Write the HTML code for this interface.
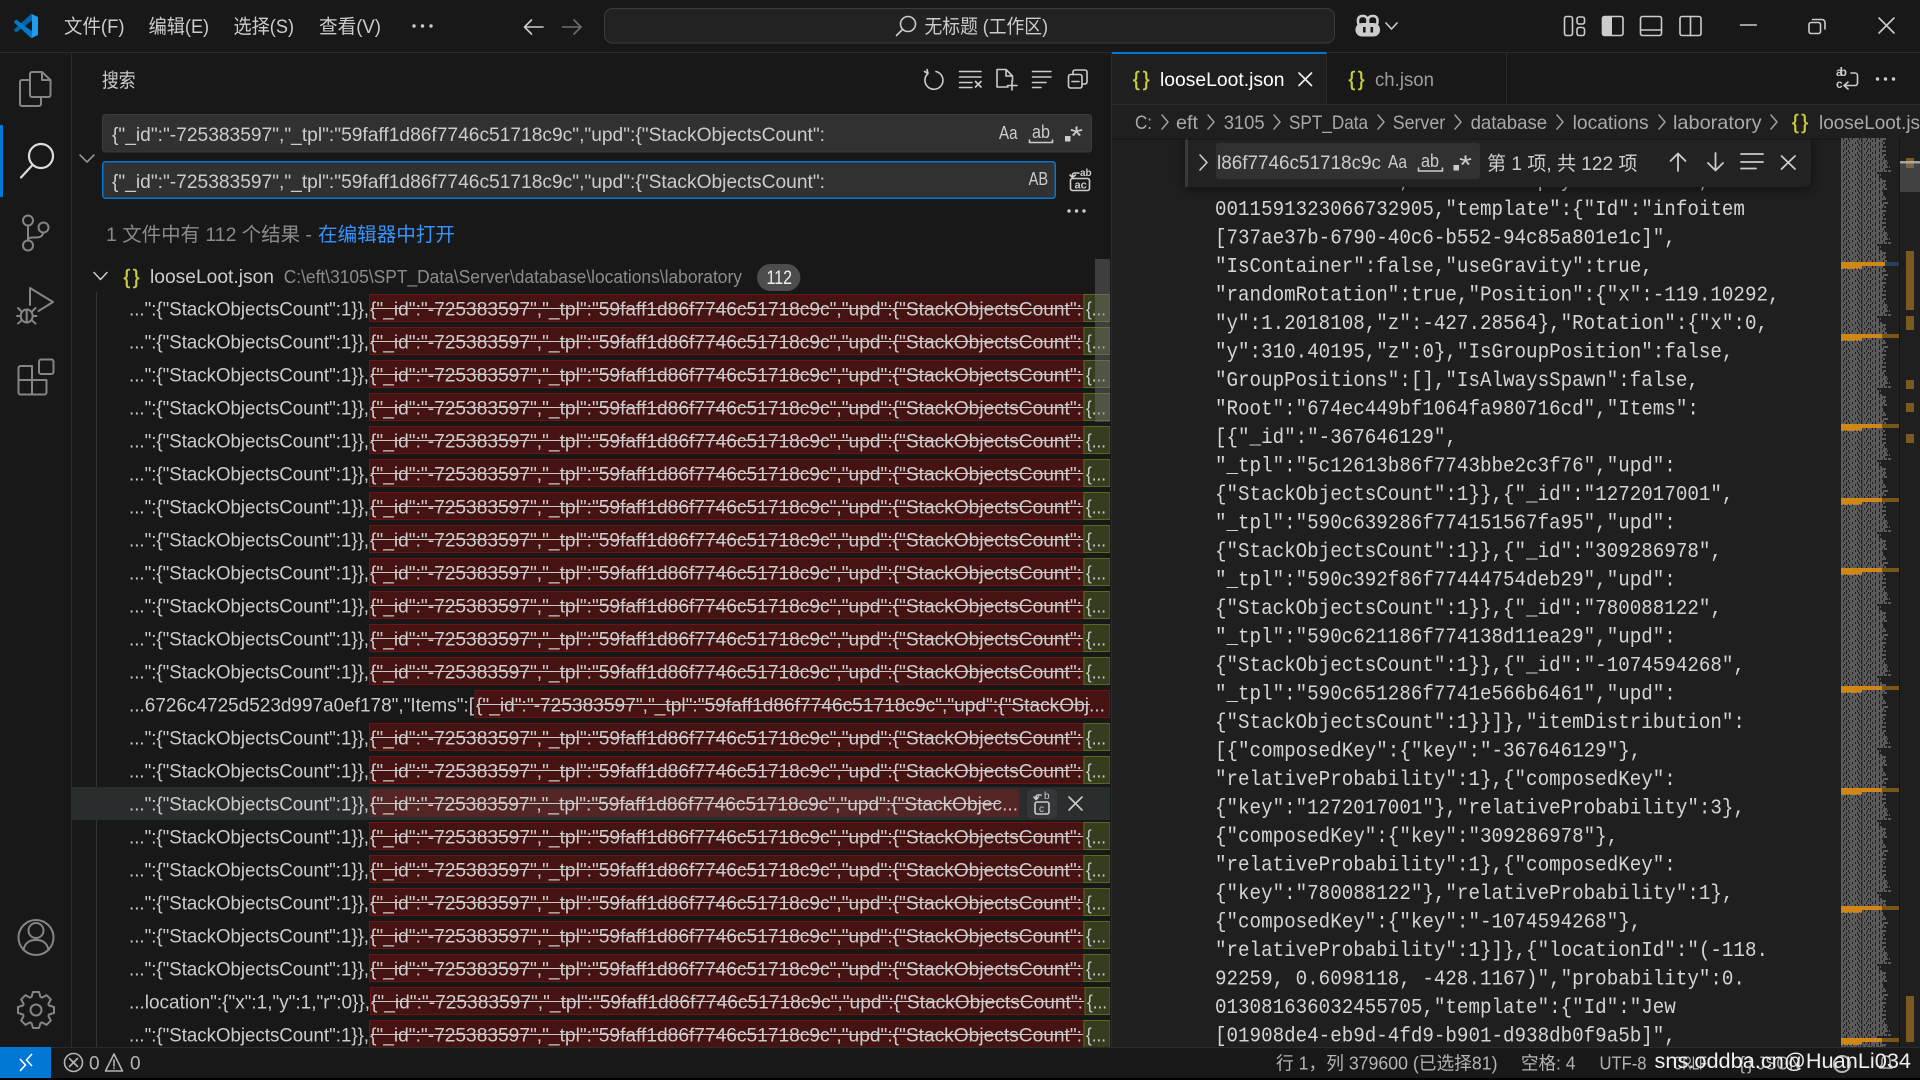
<!DOCTYPE html>
<html lang="zh"><head><meta charset="utf-8"><title>VS Code</title>
<style>
html,body{margin:0;padding:0;background:#000;width:1920px;height:1080px;overflow:hidden}
svg{display:block}
text{font-family:"Liberation Sans","Noto Sans CJK SC",sans-serif;font-size:19.5px;fill:#ccc;white-space:pre}
.m text{font-family:"Liberation Mono",monospace;font-size:21px;fill:#d4d4d4}
.r{fill:#461313;stroke:#6f1313;stroke-width:1}
.g{fill:#363d1f;stroke:#556b22;stroke-width:1}
.sl{stroke:#c8c8c8;stroke-width:1.1;fill:none}
.i{fill:none;stroke:#ccc;stroke-width:1.6;stroke-linecap:round;stroke-linejoin:round}
.a{fill:none;stroke:#858585;stroke-width:2;stroke-linecap:round;stroke-linejoin:round}
.c{fill:none;stroke:#a0a0a0;stroke-width:1.5;stroke-linecap:round;stroke-linejoin:round}
.y{fill:#cbcb41;font-size:20px;stroke:#cbcb41;stroke-width:.4}
.b{fill:#a9a9a9}
.st{font-size:18px;fill:#b4b4b4}
</style></head><body>
<svg width="1920" height="1080" viewBox="0 0 1920 1080" xmlns="http://www.w3.org/2000/svg">
<defs>
<filter id="sh" x="-10%" y="-50%" width="120%" height="200%"><feDropShadow dx="0" dy="2" stdDeviation="6" flood-color="#000" flood-opacity=".55"/></filter>
<clipPath id="cs"><rect x="72" y="292" width="1038" height="755"/></clipPath>
<clipPath id="ci"><rect x="1218" y="143" width="166" height="36"/></clipPath>
<clipPath id="ce"><rect x="1112" y="138" width="808" height="909"/></clipPath>
<pattern id="mm" x="1841" y="138" width="58" height="72" patternUnits="userSpaceOnUse">
<g fill="none" stroke="#7e7e7e" stroke-width="1.2">
<path stroke-dasharray="2 1 4 1 3 1 6 1 1 1 5 1" d="M0 1H45M0 7H42M0 13H46M0 19H43M0 25H48M0 31H44M0 37H40M0 43H46M0 49H44M0 55H42M0 61H46M0 67H43"/>
<path stroke-dasharray="5 1 2 1 7 1 3 1 4 1" d="M0 3H43M0 9H45M0 15H41M0 21H44M0 27H47M0 33H50M0 39H38M0 45H44M0 51H46M0 57H43M0 63H41M0 69H45"/>
<path stroke-dasharray="3 1 1 1 8 1 2 1 5 1" d="M0 5H44M0 11H42M0 17H45M0 23H46M0 29H49M0 35H36M0 41H42M0 47H45M0 53H41M0 59H44M0 65H47M0 71H42"/>
</g><rect x="20.5" y="0" width="1.2" height="72" fill="#1f1f1f" opacity=".55"/>
</pattern>
</defs>

<!-- base -->
<rect width="1920" height="1080" fill="#000"/>
<rect width="1920" height="1078" fill="#181818"/>
<path d="M0 52.5H1920" stroke="#2b2b2b"/>
<path d="M71.5 52V1047M1111.5 52V1047" stroke="#2b2b2b"/>

<!-- title bar -->
<g transform="translate(14,14) scale(.24)">
<path fill="#0065A9" d="M96.5 10.8 75.9.9c-2.4-1.2-5.2-.7-7.1 1.2L1.4 63.5c-1.8 1.6-1.8 4.5 0 6.1l5.5 5c1.5 1.3 3.7 1.4 5.3.2L93.4 13.3c2.7-2 6.6-.1 6.6 3.3v-.2c0-2.4-1.4-4.6-3.5-5.6Z"/>
<path fill="#007ACC" d="M96.5 89.2 75.9 99.1c-2.4 1.2-5.2.7-7.1-1.2L1.4 36.5c-1.8-1.6-1.8-4.5 0-6.1l5.5-5c1.5-1.3 3.7-1.4 5.3-.2l81.2 61.5c2.7 2 6.6.1 6.6-3.3v.2c0 2.4-1.4 4.6-3.5 5.6Z"/>
<path fill="#1F9CF0" d="M75.9 99.1c-2.4 1.2-5.2.9-7.1-1 2.3 2.3 6.3.7 6.3-2.6V4.5c0-3.3-4-4.9-6.3-2.6 1.9-1.9 4.7-2.2 7.1-1l20.6 9.9c2.1 1 3.5 3.2 3.5 5.6v67.2c0 2.4-1.4 4.6-3.5 5.6Z"/>
</g>
<text x="64" y="33" textLength="60.5" lengthAdjust="spacingAndGlyphs">文件(F)</text>
<text x="148.6" y="33" textLength="60.5" lengthAdjust="spacingAndGlyphs">编辑(E)</text>
<text x="233.5" y="33" textLength="60.5" lengthAdjust="spacingAndGlyphs">选择(S)</text>
<text x="319" y="33" textLength="62" lengthAdjust="spacingAndGlyphs">查看(V)</text>
<g fill="#ccc"><circle cx="414" cy="26" r="1.7"/><circle cx="422.5" cy="26" r="1.7"/><circle cx="431" cy="26" r="1.7"/></g>
<path class="i" d="M524.5 27H543M531.5 20L524.5 27L531.5 34"/>
<path class="i" style="stroke:#6f6f6f" d="M562.5 27H581M574 20L581 27L574 34"/>
<rect x="604.5" y="8.5" width="730" height="34.5" rx="8" fill="#222" stroke="#3c3c3c"/>
<circle class="i" cx="908" cy="24" r="7.5"/><path class="i" d="M902.5 29.5L896.5 35.5"/>
<text x="924.5" y="33" textLength="123.5" lengthAdjust="spacingAndGlyphs">无标题 (工作区)</text>
<g fill="none" stroke="#ccc" stroke-width="2.6"><rect x="1358" y="16" width="9.5" height="10" rx="4"/><rect x="1368" y="16" width="9.5" height="10" rx="4"/></g>
<rect x="1355.5" y="23" width="24.5" height="13.5" rx="6.5" fill="#ccc"/>
<rect x="1363" y="27" width="2.6" height="5.5" fill="#181818"/><rect x="1370.5" y="27" width="2.6" height="5.5" fill="#181818"/>
<path class="i" d="M1386 23L1391.5 29L1397 23"/>
<g class="i">
<rect x="1564.5" y="16.5" width="8" height="19" rx="2"/><rect x="1577" y="17" width="7.5" height="7" rx="2"/><rect x="1577" y="27.5" width="7.5" height="8" rx="2"/>
<rect x="1602.5" y="16.5" width="20.5" height="19" rx="2"/>
<rect x="1640.5" y="16.5" width="21" height="19" rx="2"/><path d="M1640.5 30H1661.5"/>
<rect x="1680" y="16.5" width="21" height="19" rx="2"/><path d="M1690.5 16.5V35.5"/>
<path d="M1740.5 25H1756.3"/>
<rect x="1809" y="22.5" width="11.5" height="11" rx="2"/><path d="M1812.5 19.5H1822a3 3 0 0 1 3 3V29"/>
<path d="M1879 18L1894 33M1894 18L1879 33"/>
</g>
<path d="M1603 18.5a2 2 0 0 1 2-2h7v19h-7a2 2 0 0 1-2-2z" fill="#ccc"/>

<!-- activity bar -->
<g class="a">
<path d="M30 74a2 2 0 0 1 2-2H42L50.5 80V95a2 2 0 0 1-2 2H32a2 2 0 0 1-2-2ZM42 72V80H50.5"/>
<path d="M30 80H22a2 2 0 0 0-2 2V104a2 2 0 0 0 2 2H39a2 2 0 0 0 2-2V97"/>
<circle cx="28" cy="220.5" r="5"/><circle cx="28" cy="245.5" r="5"/><circle cx="43.5" cy="227.5" r="5"/>
<path d="M28 225.5V240.5M43 232.5C43 236 40 237.5 36 237.5H33C30 237.5 28 238 28 240.5"/>
<path d="M30 305V288L53 302L38.5 311"/>
<ellipse cx="26.7" cy="316" rx="6" ry="6.5"/><path d="M21 311L18 308M32.5 311L35.5 308M20.5 316H17M33 316H36.5M21 321L18 323.5M32.5 321L35.5 323.5M26.7 310V322"/>
<rect x="39" y="359.5" width="14.5" height="14.5" rx="2"/>
<path d="M18.5 368a2 2 0 0 1 2-2H32V380H46.5V392.5a2 2 0 0 1-2 2H20.5a2 2 0 0 1-2-2ZM18.5 380H32V394.5"/>
<circle cx="36" cy="937.5" r="17.5"/><circle cx="36" cy="930.5" r="7.5"/><path d="M23.5 950C25 942 30 940 36 940S47 942 48.5 950"/>
<circle cx="36" cy="1010" r="5.5"/>
<path transform="translate(36,1010)" d="M-3-18H3L4.5-13L6-12.4L10.6-14.85L14.85-10.6L12.4-6L13-4.5L18-3V3L13 4.5L12.4 6L14.85 10.6L10.6 14.85L6 12.4L4.5 13L3 18H-3L-4.5 13L-6 12.4L-10.6 14.85L-14.85 10.6L-12.4 6L-13 4.5L-18 3V-3L-13-4.5L-12.4-6L-14.85-10.6L-10.6-14.85L-6-12.4L-4.5-13Z"/>
</g>
<rect x="0" y="125" width="3" height="72" fill="#0078d4"/>
<circle cx="41" cy="156" r="12" fill="none" stroke="#dcdcdc" stroke-width="2.2"/><path d="M32.5 165L21 177.5" stroke="#dcdcdc" stroke-width="2.2" stroke-linecap="round"/>

<!-- sidebar header -->
<text x="102" y="87" textLength="33.5" lengthAdjust="spacingAndGlyphs">搜索</text>
<g class="i">
<path d="M928 73.5A9 9 0 1 0 936 71.5M924.5 71.5L928 73.5L927 69.5" />
<path d="M959.5 71.5H981M959.5 77H981M959.5 82.5H972M959.5 87.5H972M975.5 81.5L981 87M981 81.5L975.5 87"/>
<path d="M1008 87H997V69.5H1006L1012.5 76V81M1006 69.5V76H1012.5M1012 81V90M1007.5 85.5H1017"/>
<path d="M1032.5 71.5H1051M1032.5 77H1051M1032.5 82.5H1046M1032.5 87.5H1041"/>
<rect x="1068.5" y="74.5" width="13.5" height="13.5" rx="2"/><path d="M1073 74.5V72a2 2 0 0 1 2-2H1085a2 2 0 0 1 2 2V82a2 2 0 0 1-2 2H1082M1072 81.5H1079"/>
</g>
<path class="c" d="M80 155L87 162L94 155"/>

<!-- search inputs -->
<rect x="102.5" y="114.5" width="989" height="37.5" rx="3" fill="#313131" stroke="#3c3c3c"/>
<rect x="102.75" y="161.75" width="952.5" height="36.5" rx="3" fill="#313131" stroke="#0078d4" stroke-width="1.5"/>
<text x="112" y="141" textLength="713" lengthAdjust="spacingAndGlyphs">{"_id":"-725383597","_tpl":"59faff1d86f7746c51718c9c","upd":{"StackObjectsCount":</text>
<text x="112" y="188" textLength="713" lengthAdjust="spacingAndGlyphs">{"_id":"-725383597","_tpl":"59faff1d86f7746c51718c9c","upd":{"StackObjectsCount":</text>
<text x="999" y="139" style="font-size:18px" textLength="18.5" lengthAdjust="spacingAndGlyphs">Aa</text>
<text x="1032" y="138" style="font-size:18px" textLength="18" lengthAdjust="spacingAndGlyphs">ab</text><path class="i" d="M1029.5 140V142.5H1052.5V140"/>
<rect x="1065" y="136" width="5.5" height="5.5" fill="#ccc"/><text x="1070" y="145" style="font-size:27px" textLength="13" lengthAdjust="spacingAndGlyphs">*</text>
<text x="1028.6" y="185" style="font-size:18px" textLength="19.5" lengthAdjust="spacingAndGlyphs">AB</text>
<g class="i"><rect x="1070.5" y="178.5" width="19" height="12" rx="2"/><path d="M1072.5 177V175a2 2 0 0 1 2-2H1079M1070 175L1072.5 177.5L1075.5 175"/></g>
<text x="1080" y="176" style="font-size:10px;font-weight:bold">ab</text><text x="1074.5" y="188.5" style="font-size:11px;font-weight:bold">ac</text>
<g fill="#ccc"><circle cx="1069" cy="211" r="1.7"/><circle cx="1076.5" cy="211" r="1.7"/><circle cx="1084" cy="211" r="1.7"/></g>

<text x="106" y="241" style="fill:#8b8b8b" textLength="206" lengthAdjust="spacingAndGlyphs">1 文件中有 112 个结果 -</text>
<text x="318" y="241" style="fill:#3794ff" textLength="137" lengthAdjust="spacingAndGlyphs">在编辑器中打开</text>

<!-- file row -->
<path class="c" style="stroke:#ccc" d="M94 272.5L100.5 279.5L107 272.5"/>
<text class="y" x="123.5" y="284" textLength="16" lengthAdjust="spacing">{}</text>
<text x="150" y="283.2" textLength="124" lengthAdjust="spacingAndGlyphs">looseLoot.json</text>
<text x="283.7" y="283.2" style="fill:#8c8c8c;font-size:18px" textLength="458.3" lengthAdjust="spacingAndGlyphs">C:\eft\3105\SPT_Data\Server\database\locations\laboratory</text>
<rect x="757" y="264" width="43.4" height="27" rx="13.5" fill="#4d4d4d"/>
<text x="766.5" y="284" style="fill:#f0f0f0" textLength="25.5" lengthAdjust="spacingAndGlyphs">112</text>
<path d="M96.5 292V1047" stroke="#333"/>

<!-- results -->
<g clip-path="url(#cs)">
<rect x="72" y="787" width="1039" height="33" fill="#2a2d2e"/>
<g transform="translate(0,292)"><rect class="r" x="369.5" y="2.5" width="714" height="27"/><rect class="g" x="1084" y="2.5" width="26" height="27"/><text x="129" y="23.6" textLength="240" lengthAdjust="spacingAndGlyphs">...":{"StackObjectsCount":1}},</text><text x="370" y="23.6" textLength="712" lengthAdjust="spacingAndGlyphs">{"_id":"-725383597","_tpl":"59faff1d86f7746c51718c9c","upd":{"StackObjectsCount":</text><path class="sl" d="M371 16.5H1083"/><text x="1086" y="23.6" textLength="20" lengthAdjust="spacingAndGlyphs">{...</text></g>
<g transform="translate(0,325)"><rect class="r" x="369.5" y="2.5" width="714" height="27"/><rect class="g" x="1084" y="2.5" width="26" height="27"/><text x="129" y="23.6" textLength="240" lengthAdjust="spacingAndGlyphs">...":{"StackObjectsCount":1}},</text><text x="370" y="23.6" textLength="712" lengthAdjust="spacingAndGlyphs">{"_id":"-725383597","_tpl":"59faff1d86f7746c51718c9c","upd":{"StackObjectsCount":</text><path class="sl" d="M371 16.5H1083"/><text x="1086" y="23.6" textLength="20" lengthAdjust="spacingAndGlyphs">{...</text></g>
<g transform="translate(0,358)"><rect class="r" x="369.5" y="2.5" width="714" height="27"/><rect class="g" x="1084" y="2.5" width="26" height="27"/><text x="129" y="23.6" textLength="240" lengthAdjust="spacingAndGlyphs">...":{"StackObjectsCount":1}},</text><text x="370" y="23.6" textLength="712" lengthAdjust="spacingAndGlyphs">{"_id":"-725383597","_tpl":"59faff1d86f7746c51718c9c","upd":{"StackObjectsCount":</text><path class="sl" d="M371 16.5H1083"/><text x="1086" y="23.6" textLength="20" lengthAdjust="spacingAndGlyphs">{...</text></g>
<g transform="translate(0,391)"><rect class="r" x="369.5" y="2.5" width="714" height="27"/><rect class="g" x="1084" y="2.5" width="26" height="27"/><text x="129" y="23.6" textLength="240" lengthAdjust="spacingAndGlyphs">...":{"StackObjectsCount":1}},</text><text x="370" y="23.6" textLength="712" lengthAdjust="spacingAndGlyphs">{"_id":"-725383597","_tpl":"59faff1d86f7746c51718c9c","upd":{"StackObjectsCount":</text><path class="sl" d="M371 16.5H1083"/><text x="1086" y="23.6" textLength="20" lengthAdjust="spacingAndGlyphs">{...</text></g>
<g transform="translate(0,424)"><rect class="r" x="369.5" y="2.5" width="714" height="27"/><rect class="g" x="1084" y="2.5" width="26" height="27"/><text x="129" y="23.6" textLength="240" lengthAdjust="spacingAndGlyphs">...":{"StackObjectsCount":1}},</text><text x="370" y="23.6" textLength="712" lengthAdjust="spacingAndGlyphs">{"_id":"-725383597","_tpl":"59faff1d86f7746c51718c9c","upd":{"StackObjectsCount":</text><path class="sl" d="M371 16.5H1083"/><text x="1086" y="23.6" textLength="20" lengthAdjust="spacingAndGlyphs">{...</text></g>
<g transform="translate(0,457)"><rect class="r" x="369.5" y="2.5" width="714" height="27"/><rect class="g" x="1084" y="2.5" width="26" height="27"/><text x="129" y="23.6" textLength="240" lengthAdjust="spacingAndGlyphs">...":{"StackObjectsCount":1}},</text><text x="370" y="23.6" textLength="712" lengthAdjust="spacingAndGlyphs">{"_id":"-725383597","_tpl":"59faff1d86f7746c51718c9c","upd":{"StackObjectsCount":</text><path class="sl" d="M371 16.5H1083"/><text x="1086" y="23.6" textLength="20" lengthAdjust="spacingAndGlyphs">{...</text></g>
<g transform="translate(0,490)"><rect class="r" x="369.5" y="2.5" width="714" height="27"/><rect class="g" x="1084" y="2.5" width="26" height="27"/><text x="129" y="23.6" textLength="240" lengthAdjust="spacingAndGlyphs">...":{"StackObjectsCount":1}},</text><text x="370" y="23.6" textLength="712" lengthAdjust="spacingAndGlyphs">{"_id":"-725383597","_tpl":"59faff1d86f7746c51718c9c","upd":{"StackObjectsCount":</text><path class="sl" d="M371 16.5H1083"/><text x="1086" y="23.6" textLength="20" lengthAdjust="spacingAndGlyphs">{...</text></g>
<g transform="translate(0,523)"><rect class="r" x="369.5" y="2.5" width="714" height="27"/><rect class="g" x="1084" y="2.5" width="26" height="27"/><text x="129" y="23.6" textLength="240" lengthAdjust="spacingAndGlyphs">...":{"StackObjectsCount":1}},</text><text x="370" y="23.6" textLength="712" lengthAdjust="spacingAndGlyphs">{"_id":"-725383597","_tpl":"59faff1d86f7746c51718c9c","upd":{"StackObjectsCount":</text><path class="sl" d="M371 16.5H1083"/><text x="1086" y="23.6" textLength="20" lengthAdjust="spacingAndGlyphs">{...</text></g>
<g transform="translate(0,556)"><rect class="r" x="369.5" y="2.5" width="714" height="27"/><rect class="g" x="1084" y="2.5" width="26" height="27"/><text x="129" y="23.6" textLength="240" lengthAdjust="spacingAndGlyphs">...":{"StackObjectsCount":1}},</text><text x="370" y="23.6" textLength="712" lengthAdjust="spacingAndGlyphs">{"_id":"-725383597","_tpl":"59faff1d86f7746c51718c9c","upd":{"StackObjectsCount":</text><path class="sl" d="M371 16.5H1083"/><text x="1086" y="23.6" textLength="20" lengthAdjust="spacingAndGlyphs">{...</text></g>
<g transform="translate(0,589)"><rect class="r" x="369.5" y="2.5" width="714" height="27"/><rect class="g" x="1084" y="2.5" width="26" height="27"/><text x="129" y="23.6" textLength="240" lengthAdjust="spacingAndGlyphs">...":{"StackObjectsCount":1}},</text><text x="370" y="23.6" textLength="712" lengthAdjust="spacingAndGlyphs">{"_id":"-725383597","_tpl":"59faff1d86f7746c51718c9c","upd":{"StackObjectsCount":</text><path class="sl" d="M371 16.5H1083"/><text x="1086" y="23.6" textLength="20" lengthAdjust="spacingAndGlyphs">{...</text></g>
<g transform="translate(0,622)"><rect class="r" x="369.5" y="2.5" width="714" height="27"/><rect class="g" x="1084" y="2.5" width="26" height="27"/><text x="129" y="23.6" textLength="240" lengthAdjust="spacingAndGlyphs">...":{"StackObjectsCount":1}},</text><text x="370" y="23.6" textLength="712" lengthAdjust="spacingAndGlyphs">{"_id":"-725383597","_tpl":"59faff1d86f7746c51718c9c","upd":{"StackObjectsCount":</text><path class="sl" d="M371 16.5H1083"/><text x="1086" y="23.6" textLength="20" lengthAdjust="spacingAndGlyphs">{...</text></g>
<g transform="translate(0,655)"><rect class="r" x="369.5" y="2.5" width="714" height="27"/><rect class="g" x="1084" y="2.5" width="26" height="27"/><text x="129" y="23.6" textLength="240" lengthAdjust="spacingAndGlyphs">...":{"StackObjectsCount":1}},</text><text x="370" y="23.6" textLength="712" lengthAdjust="spacingAndGlyphs">{"_id":"-725383597","_tpl":"59faff1d86f7746c51718c9c","upd":{"StackObjectsCount":</text><path class="sl" d="M371 16.5H1083"/><text x="1086" y="23.6" textLength="20" lengthAdjust="spacingAndGlyphs">{...</text></g>
<g transform="translate(0,688)"><rect class="r" x="475" y="2.5" width="634.5" height="27"/><text x="129" y="23.6" textLength="345" lengthAdjust="spacingAndGlyphs">...6726c4725d523d997a0ef178","Items":[</text><text x="476" y="23.6" textLength="629" lengthAdjust="spacingAndGlyphs">{"_id":"-725383597","_tpl":"59faff1d86f7746c51718c9c","upd":{"StackObj...</text><path class="sl" d="M477 16.5H1090"/></g>
<g transform="translate(0,721)"><rect class="r" x="369.5" y="2.5" width="714" height="27"/><rect class="g" x="1084" y="2.5" width="26" height="27"/><text x="129" y="23.6" textLength="240" lengthAdjust="spacingAndGlyphs">...":{"StackObjectsCount":1}},</text><text x="370" y="23.6" textLength="712" lengthAdjust="spacingAndGlyphs">{"_id":"-725383597","_tpl":"59faff1d86f7746c51718c9c","upd":{"StackObjectsCount":</text><path class="sl" d="M371 16.5H1083"/><text x="1086" y="23.6" textLength="20" lengthAdjust="spacingAndGlyphs">{...</text></g>
<g transform="translate(0,754)"><rect class="r" x="369.5" y="2.5" width="714" height="27"/><rect class="g" x="1084" y="2.5" width="26" height="27"/><text x="129" y="23.6" textLength="240" lengthAdjust="spacingAndGlyphs">...":{"StackObjectsCount":1}},</text><text x="370" y="23.6" textLength="712" lengthAdjust="spacingAndGlyphs">{"_id":"-725383597","_tpl":"59faff1d86f7746c51718c9c","upd":{"StackObjectsCount":</text><path class="sl" d="M371 16.5H1083"/><text x="1086" y="23.6" textLength="20" lengthAdjust="spacingAndGlyphs">{...</text></g>
<g transform="translate(0,787)"><rect x="369.5" y="2" width="649.5" height="28" fill="#532525"/><text x="129" y="23.6" textLength="240" lengthAdjust="spacingAndGlyphs">...":{"StackObjectsCount":1}},</text><text x="370" y="23.6" textLength="648" lengthAdjust="spacingAndGlyphs">{"_id":"-725383597","_tpl":"59faff1d86f7746c51718c9c","upd":{"StackObjec...</text><path class="sl" d="M371 16.5H1000"/>
<rect x="1027" y="2" width="30" height="30" rx="6" fill="#33373a"/><g class="i"><rect x="1035" y="15" width="14" height="12" rx="2"/><path d="M1036 12V10a2 2 0 0 1 2-2H1041M1034 10L1036 12.5L1038.5 10"/><path d="M1069 10L1082 23M1082 10L1069 23"/></g><text x="1044" y="12" style="font-size:10px">b</text><text x="1039" y="25" style="font-size:10px">c</text></g>
<g transform="translate(0,820)"><rect class="r" x="369.5" y="2.5" width="714" height="27"/><rect class="g" x="1084" y="2.5" width="26" height="27"/><text x="129" y="23.6" textLength="240" lengthAdjust="spacingAndGlyphs">...":{"StackObjectsCount":1}},</text><text x="370" y="23.6" textLength="712" lengthAdjust="spacingAndGlyphs">{"_id":"-725383597","_tpl":"59faff1d86f7746c51718c9c","upd":{"StackObjectsCount":</text><path class="sl" d="M371 16.5H1083"/><text x="1086" y="23.6" textLength="20" lengthAdjust="spacingAndGlyphs">{...</text></g>
<g transform="translate(0,853)"><rect class="r" x="369.5" y="2.5" width="714" height="27"/><rect class="g" x="1084" y="2.5" width="26" height="27"/><text x="129" y="23.6" textLength="240" lengthAdjust="spacingAndGlyphs">...":{"StackObjectsCount":1}},</text><text x="370" y="23.6" textLength="712" lengthAdjust="spacingAndGlyphs">{"_id":"-725383597","_tpl":"59faff1d86f7746c51718c9c","upd":{"StackObjectsCount":</text><path class="sl" d="M371 16.5H1083"/><text x="1086" y="23.6" textLength="20" lengthAdjust="spacingAndGlyphs">{...</text></g>
<g transform="translate(0,886)"><rect class="r" x="369.5" y="2.5" width="714" height="27"/><rect class="g" x="1084" y="2.5" width="26" height="27"/><text x="129" y="23.6" textLength="240" lengthAdjust="spacingAndGlyphs">...":{"StackObjectsCount":1}},</text><text x="370" y="23.6" textLength="712" lengthAdjust="spacingAndGlyphs">{"_id":"-725383597","_tpl":"59faff1d86f7746c51718c9c","upd":{"StackObjectsCount":</text><path class="sl" d="M371 16.5H1083"/><text x="1086" y="23.6" textLength="20" lengthAdjust="spacingAndGlyphs">{...</text></g>
<g transform="translate(0,919)"><rect class="r" x="369.5" y="2.5" width="714" height="27"/><rect class="g" x="1084" y="2.5" width="26" height="27"/><text x="129" y="23.6" textLength="240" lengthAdjust="spacingAndGlyphs">...":{"StackObjectsCount":1}},</text><text x="370" y="23.6" textLength="712" lengthAdjust="spacingAndGlyphs">{"_id":"-725383597","_tpl":"59faff1d86f7746c51718c9c","upd":{"StackObjectsCount":</text><path class="sl" d="M371 16.5H1083"/><text x="1086" y="23.6" textLength="20" lengthAdjust="spacingAndGlyphs">{...</text></g>
<g transform="translate(0,952)"><rect class="r" x="369.5" y="2.5" width="714" height="27"/><rect class="g" x="1084" y="2.5" width="26" height="27"/><text x="129" y="23.6" textLength="240" lengthAdjust="spacingAndGlyphs">...":{"StackObjectsCount":1}},</text><text x="370" y="23.6" textLength="712" lengthAdjust="spacingAndGlyphs">{"_id":"-725383597","_tpl":"59faff1d86f7746c51718c9c","upd":{"StackObjectsCount":</text><path class="sl" d="M371 16.5H1083"/><text x="1086" y="23.6" textLength="20" lengthAdjust="spacingAndGlyphs">{...</text></g>
<g transform="translate(0,985)"><rect class="r" x="370.5" y="2.5" width="714.5" height="27"/><rect class="g" x="1085" y="2.5" width="25" height="27"/><text x="129" y="23.6" textLength="241" lengthAdjust="spacingAndGlyphs">...location":{"x":1,"y":1,"r":0}},</text><text x="371" y="23.6" textLength="712" lengthAdjust="spacingAndGlyphs">{"_id":"-725383597","_tpl":"59faff1d86f7746c51718c9c","upd":{"StackObjectsCount":</text><path class="sl" d="M372 16.5H1084"/><text x="1087" y="23.6" textLength="20" lengthAdjust="spacingAndGlyphs">{...</text></g>
<g transform="translate(0,1018)"><rect class="r" x="369.5" y="2.5" width="714" height="27"/><rect class="g" x="1084" y="2.5" width="26" height="27"/><text x="129" y="23.6" textLength="240" lengthAdjust="spacingAndGlyphs">...":{"StackObjectsCount":1}},</text><text x="370" y="23.6" textLength="712" lengthAdjust="spacingAndGlyphs">{"_id":"-725383597","_tpl":"59faff1d86f7746c51718c9c","upd":{"StackObjectsCount":</text><path class="sl" d="M371 16.5H1083"/><text x="1086" y="23.6" textLength="20" lengthAdjust="spacingAndGlyphs">{...</text></g>
</g>
<rect x="1095" y="259" width="15" height="163" fill="#797979" opacity=".4"/>

<!-- editor -->
<rect x="1112" y="105" width="808" height="942" fill="#1f1f1f"/>
<path d="M1112 104.5H1920" stroke="#2b2b2b"/>
<rect x="1112" y="53" width="214.5" height="52" fill="#1f1f1f"/>
<rect x="1112" y="52" width="214.5" height="2" fill="#0078d4"/>
<path d="M1326.5 53V105M1506.5 53V104" stroke="#2b2b2b"/>
<text class="y" x="1133" y="86" textLength="16.5" lengthAdjust="spacing">{}</text>
<text x="1160" y="86" style="fill:#fff" textLength="124.5" lengthAdjust="spacingAndGlyphs">looseLoot.json</text>
<path d="M1299 73L1311.5 85.5M1311.5 73L1299 85.5" stroke="#eee" stroke-width="1.7" stroke-linecap="round"/>
<text class="y" x="1348.5" y="86" textLength="16" lengthAdjust="spacing">{}</text>
<text x="1375" y="86" style="fill:#9d9d9d" textLength="59" lengthAdjust="spacingAndGlyphs">ch.json</text>
<text x="1836" y="76" style="font-size:12px;font-weight:bold" textLength="11">ab</text><text x="1836" y="88" style="font-size:12px;font-weight:bold">c</text>
<path class="i" d="M1851 73H1855a2.5 2.5 0 0 1 2.5 2.5V83a2.5 2.5 0 0 1-2.5 2.5H1844M1848 82L1844 85.5L1848 89"/>
<g fill="#ccc"><circle cx="1877.5" cy="79" r="1.7"/><circle cx="1885.5" cy="79" r="1.7"/><circle cx="1893.5" cy="79" r="1.7"/></g>

<!-- code -->
<g clip-path="url(#ce)">
<g class="m" transform="translate(1215,-0.4) scale(.915,1)">
<text x="0" y="187">                ,           p y           ,</text>
<text x="0" y="215.5">0011591323066732905,"template":{"Id":"infoitem</text>
<text x="0" y="244">[737ae37b-6790-40c6-b552-94c85a801e1c]",</text>
<text x="0" y="272.5">"IsContainer":false,"useGravity":true,</text>
<text x="0" y="301">"randomRotation":true,"Position":{"x":-119.10292,</text>
<text x="0" y="329.5">"y":1.2018108,"z":-427.28564},"Rotation":{"x":0,</text>
<text x="0" y="358">"y":310.40195,"z":0},"IsGroupPosition":false,</text>
<text x="0" y="386.5">"GroupPositions":[],"IsAlwaysSpawn":false,</text>
<text x="0" y="415">"Root":"674ec449bf1064fa980716cd","Items":</text>
<text x="0" y="443.5">[{"_id":"-367646129",</text>
<text x="0" y="472">"_tpl":"5c12613b86f7743bbe2c3f76","upd":</text>
<text x="0" y="500.5">{"StackObjectsCount":1}},{"_id":"1272017001",</text>
<text x="0" y="529">"_tpl":"590c639286f774151567fa95","upd":</text>
<text x="0" y="557.5">{"StackObjectsCount":1}},{"_id":"309286978",</text>
<text x="0" y="586">"_tpl":"590c392f86f77444754deb29","upd":</text>
<text x="0" y="614.5">{"StackObjectsCount":1}},{"_id":"780088122",</text>
<text x="0" y="643">"_tpl":"590c621186f774138d11ea29","upd":</text>
<text x="0" y="671.5">{"StackObjectsCount":1}},{"_id":"-1074594268",</text>
<text x="0" y="700">"_tpl":"590c651286f7741e566b6461","upd":</text>
<text x="0" y="728.5">{"StackObjectsCount":1}}]},"itemDistribution":</text>
<text x="0" y="757">[{"composedKey":{"key":"-367646129"},</text>
<text x="0" y="785.5">"relativeProbability":1},{"composedKey":</text>
<text x="0" y="814">{"key":"1272017001"},"relativeProbability":3},</text>
<text x="0" y="842.5">{"composedKey":{"key":"309286978"},</text>
<text x="0" y="871">"relativeProbability":1},{"composedKey":</text>
<text x="0" y="899.5">{"key":"780088122"},"relativeProbability":1},</text>
<text x="0" y="928">{"composedKey":{"key":"-1074594268"},</text>
<text x="0" y="956.5">"relativeProbability":1}]},{"locationId":"(-118.</text>
<text x="0" y="985">92259, 0.6098118, -428.1167)","probability":0.</text>
<text x="0" y="1013.5">013081636032455705,"template":{"Id":"Jew</text>
<text x="0" y="1042">[01908de4-eb9d-4fd9-b901-d938db0f9a5b]",</text>
</g>
</g>

<!-- minimap -->
<rect x="1841" y="138" width="58" height="909" fill="url(#mm)"/>
<g fill="#d18616">
<rect x="1841" y="262" width="44" height="4"/><rect x="1841" y="266" width="21" height="2.5"/>
<rect x="1841" y="334" width="41" height="4"/><rect x="1841" y="338" width="21" height="2.5"/>
<rect x="1841" y="424" width="41" height="4"/><rect x="1841" y="428" width="21" height="2.5"/>
<rect x="1841" y="498" width="41" height="4"/><rect x="1841" y="502" width="21" height="2.5"/>
<rect x="1841" y="568" width="41" height="4"/><rect x="1841" y="572" width="21" height="2.5"/>
<rect x="1841" y="686" width="41" height="4"/><rect x="1841" y="690" width="21" height="2.5"/>
<rect x="1841" y="788" width="41" height="4"/><rect x="1841" y="792" width="21" height="2.5"/>
<rect x="1841" y="906" width="41" height="4"/><rect x="1841" y="910" width="21" height="2.5"/>
<rect x="1841" y="1038" width="41" height="4"/><rect x="1841" y="1042" width="21" height="2.5"/>
</g>
<g fill="#7a5518">
<rect x="1882" y="334" width="17" height="4"/><rect x="1882" y="424" width="17" height="4"/><rect x="1882" y="498" width="17" height="4"/><rect x="1882" y="568" width="17" height="4"/><rect x="1882" y="686" width="17" height="4"/><rect x="1882" y="788" width="17" height="4"/><rect x="1882" y="906" width="17" height="4"/><rect x="1882" y="1038" width="17" height="4"/>
</g>
<rect x="1885" y="262" width="14" height="4" fill="#264059"/>
<!-- scrollbar -->
<path d="M1899.5 138V1047" stroke="#141414"/>
<g fill="#7a5a20">
<rect x="1906" y="158" width="8" height="10"/><rect x="1906" y="251" width="8" height="59"/><rect x="1906" y="316" width="8" height="14"/><rect x="1906" y="380" width="8" height="9"/><rect x="1906" y="403" width="8" height="9"/><rect x="1906" y="434" width="8" height="9"/><rect x="1906" y="996" width="8" height="46"/>
</g>
<rect x="1900" y="161" width="20" height="31" fill="#797979" opacity=".4"/>
<rect x="1900" y="161" width="20" height="2.5" fill="#bbb" opacity=".8"/>

<!-- find widget -->
<rect x="1185" y="130" width="626" height="57" rx="6" fill="#202020" filter="url(#sh)"/>
<rect x="1185" y="130" width="3" height="57" fill="#3a3a3a"/>
<rect x="1112" y="105" width="808" height="33" fill="#1f1f1f"/>
<path d="M1112 104.5H1920" stroke="#2b2b2b"/>
<rect x="1112" y="138" width="729" height="2" fill="#141414" opacity=".5"/>
<g class="b">
<text class="b" x="1135" y="129" textLength="17" lengthAdjust="spacingAndGlyphs">C:</text>
<text class="b" x="1176" y="129" textLength="22" lengthAdjust="spacingAndGlyphs">eft</text>
<text class="b" x="1223.7" y="129" textLength="41" lengthAdjust="spacingAndGlyphs">3105</text>
<text class="b" x="1289" y="129" textLength="79" lengthAdjust="spacingAndGlyphs">SPT_Data</text>
<text class="b" x="1392.7" y="129" textLength="52.5" lengthAdjust="spacingAndGlyphs">Server</text>
<text class="b" x="1470.6" y="129" textLength="76.5" lengthAdjust="spacingAndGlyphs">database</text>
<text class="b" x="1572.6" y="129" textLength="76" lengthAdjust="spacingAndGlyphs">locations</text>
<text class="b" x="1673" y="129" textLength="88.6" lengthAdjust="spacingAndGlyphs">laboratory</text>
</g>
<path class="c" d="M1162 115L1168 122L1162 129M1208 115L1214 122L1208 129M1274 115L1280 122L1274 129M1378 115L1384 122L1378 129M1455 115L1461 122L1455 129M1557 115L1563 122L1557 129M1659 115L1665 122L1659 129M1771 115L1777 122L1771 129"/>
<text class="y" x="1792" y="129" textLength="16" lengthAdjust="spacing">{}</text>
<text class="b" x="1819" y="129" textLength="101" lengthAdjust="spacingAndGlyphs">looseLoot.js</text>

<path class="i" d="M1200 155L1207 162.5L1200 170"/>
<rect x="1216" y="143" width="264" height="36" rx="3" fill="#313131"/>
<g clip-path="url(#ci)"><text x="1217" y="169" textLength="164" lengthAdjust="spacingAndGlyphs">l86f7746c51718c9c</text></g>
<text x="1388" y="168" style="font-size:18px" textLength="19" lengthAdjust="spacingAndGlyphs">Aa</text>
<text x="1421" y="167" style="font-size:18px" textLength="18" lengthAdjust="spacingAndGlyphs">ab</text><path class="i" d="M1418.5 168V171H1442.5V168"/>
<rect x="1453.5" y="165" width="5.5" height="5.5" fill="#ccc"/><text x="1459" y="174" style="font-size:27px" textLength="13" lengthAdjust="spacingAndGlyphs">*</text>
<text x="1487" y="170" textLength="150.5" lengthAdjust="spacingAndGlyphs">第 1 项, 共 122 项</text>
<g class="i" style="stroke-width:1.8">
<path d="M1678 171V153.5M1670.5 161L1678 153.5L1685.5 161"/>
<path d="M1715.5 153V170.5M1708 163L1715.5 170.5L1723 163"/>
<path d="M1741 154H1763M1741 162H1763M1741 168.5H1756"/>
<path d="M1781.5 156L1795 169M1795 156L1781.5 169"/>
</g>

<!-- status bar -->
<rect x="0" y="1047" width="1920" height="31" fill="#181818"/>
<path d="M0 1047.5H1920" stroke="#2b2b2b"/>
<rect x="0" y="1047" width="51" height="31" fill="#0078d4"/>
<path d="M20 1059L25.5 1065L20 1071M32 1054L26.5 1060L32 1066" stroke="#fff" stroke-width="1.6" fill="none"/>
<g class="i" style="stroke:#b4b4b4">
<circle cx="73.5" cy="1062.5" r="9"/><path d="M69.5 1058.5L77.5 1066.5M77.5 1058.5L69.5 1066.5"/>
<path d="M114 1054L122.5 1071H105.5ZM114 1060V1066M114 1068V1068.5"/>
</g>
<text class="st" x="89" y="1069.5" style="font-size:19px" textLength="9.5">0</text>
<text class="st" x="130" y="1069.5" style="font-size:19px" textLength="9.5">0</text>
<text class="st" x="1276" y="1069.5" textLength="221.5" lengthAdjust="spacingAndGlyphs">行 1，列 379600 (已选择81)</text>
<text class="st" x="1521" y="1069.5" textLength="54.5" lengthAdjust="spacingAndGlyphs">空格: 4</text>
<text class="st" x="1599.5" y="1069.5" textLength="47" lengthAdjust="spacingAndGlyphs">UTF-8</text>
<text class="st" x="1673" y="1069.5" textLength="34" lengthAdjust="spacingAndGlyphs">CRLF</text>
<text class="st" x="1739" y="1069.5" textLength="14">{}</text>
<text class="st" x="1757" y="1069.5" textLength="44" lengthAdjust="spacingAndGlyphs">JSON</text>
<circle cx="1842" cy="1064" r="8" fill="none" stroke="#b4b4b4" stroke-width="2"/>
<path class="i" style="stroke:#b4b4b4" d="M1880 1068H1892L1890 1064V1060a4 4 0 0 0-8 0V1064Z"/>
<text x="1654.5" y="1068" style="font-size:21px;fill:#f0f0f0" textLength="256.5" lengthAdjust="spacingAndGlyphs">sns.oddba.cn@HuanLi034</text>
</svg>
</body></html>
